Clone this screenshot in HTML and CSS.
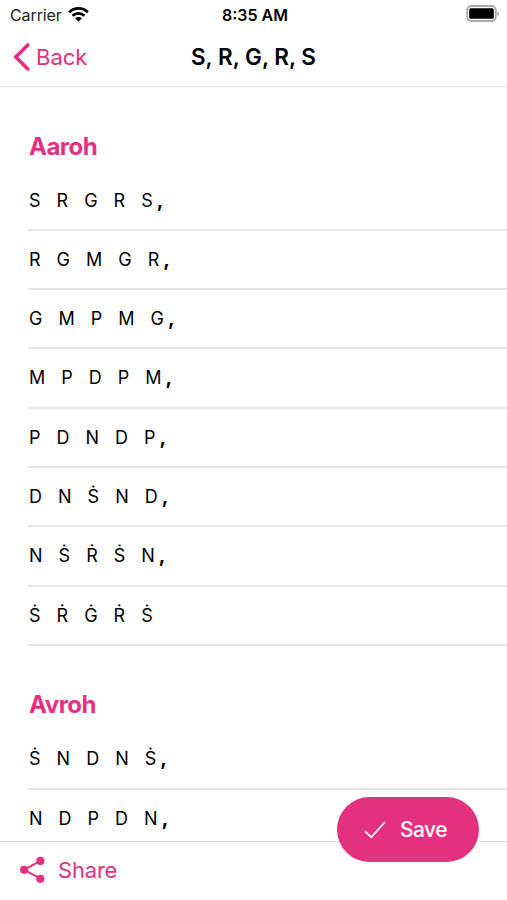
FILE: index.html
```html
<!DOCTYPE html>
<html lang="en">
<head>
    <meta charset="UTF-8">
    <meta name="viewport" content="width=device-width, initial-scale=1.0">
    <title>S, R, G, R, S</title>
    <link rel="stylesheet" href="styles.css">
</head>
<body>
    <div class="screen">
        <div class="status-bar">
            <div class="carrier">
                <span>Carrier</span>
                <svg class="wifi" width="21" height="15" viewBox="0 0 21 15">
                    <g fill="none" stroke="#000" stroke-width="2.7">
                        <path d="M1.2 5.2C6.5 0.2 14.5 0.2 19.8 5.2"/>
                        <path d="M4.5 8.8C8 5.6 13 5.6 16.5 8.8"/>
                    </g>
                    <path d="M7 11.2C9 9.5 12 9.5 14 11.2L10.5 14.8Z"/>
                </svg>
            </div>
            <span class="time">8:35 AM</span>
            <svg class="battery" width="34" height="18" viewBox="0 0 34 18">
                <rect x="1.2" y="1" width="28.6" height="15" rx="4.2" fill="#fff" stroke="#aaa" stroke-width="1.8"/>
                <rect x="3.2" y="3.2" width="24.6" height="10.6" rx="1.6" fill="#000"/>
                <path d="M31.4 6.4Q33.2 7 33.2 8.7T31.4 11Z" fill="#aaa"/>
            </svg>
        </div>

        <header class="nav">
            <a class="back">
                <svg width="17" height="28" viewBox="0 0 17 28">
                    <path d="M14.8 2L2.8 14L14.8 26" fill="none" stroke="currentColor" stroke-width="3.6" stroke-linecap="round"/>
                </svg>
                <span>Back</span>
            </a>
            <h1>S, R, G, R, S</h1>
        </header>

        <main class="content">
            <section>
                <h2>Aaroh</h2>
                <ul class="rows">
                    <li><i>S</i><i>R</i><i>G</i><i>R</i><i>S</i><b>,</b></li>
                    <li><i>R</i><i>G</i><i>M</i><i>G</i><i>R</i><b>,</b></li>
                    <li><i>G</i><i>M</i><i>P</i><i>M</i><i>G</i><b>,</b></li>
                    <li><i>M</i><i>P</i><i>D</i><i>P</i><i>M</i><b>,</b></li>
                    <li><i>P</i><i>D</i><i>N</i><i>D</i><i>P</i><b>,</b></li>
                    <li><i>D</i><i>N</i><i>Ṡ</i><i>N</i><i>D</i><b>,</b></li>
                    <li><i>N</i><i>Ṡ</i><i>Ṙ</i><i>Ṡ</i><i>N</i><b>,</b></li>
                    <li><i>Ṡ</i><i>Ṙ</i><i>Ġ</i><i>Ṙ</i><i>Ṡ</i></li>
                </ul>
            </section>
            <section>
                <h2>Avroh</h2>
                <ul class="rows">
                    <li><i>Ṡ</i><i>N</i><i>D</i><i>N</i><i>Ṡ</i><b>,</b></li>
                    <li><i>N</i><i>D</i><i>P</i><i>D</i><i>N</i><b>,</b></li>
                </ul>
            </section>
        </main>

        <footer class="toolbar">
            <a class="share">
                <svg width="26" height="28" viewBox="0 0 26 28">
                    <path d="M20.4 4.9L4.2 13.8L20.4 22.7" fill="none" stroke="currentColor" stroke-width="2"/>
                    <g fill="currentColor">
                        <circle cx="20.3" cy="4.9" r="4.1"/>
                        <circle cx="4.1" cy="13.8" r="4.1"/>
                        <circle cx="20.3" cy="22.8" r="4.1"/>
                    </g>
                </svg>
                <span>Share</span>
            </a>
        </footer>

        <button class="save">
            <svg width="22" height="18" viewBox="0 0 22 18">
                <path d="M1 10.2L7.2 16.2L21 1" fill="none" stroke="currentColor" stroke-width="1.7"/>
            </svg>
            <span>Save</span>
        </button>
    </div>
</body>
</html>
```

FILE: styles.css
```css
body {
    margin: 0;
    font-family: Inter, "Liberation Sans", sans-serif;
    background-color: #fff;
    color: #000;
}
.screen {
    position: relative;
    display: flex;
    flex-direction: column;
    height: 900px;
    overflow: hidden;
}
.status-bar {
    display: grid;
    grid-template-columns: 1fr auto 1fr;
    align-items: center;
    height: 29px;
    padding: 0 7px 0 10px;
    flex: none;
}
.carrier {
    display: flex;
    align-items: center;
    gap: 6px;
    font-size: 16px;
    letter-spacing: -0.1px;
    color: #222;
}
.time {
    font-size: 16px;
    font-weight: 600;
}
.battery {
    justify-self: end;
    margin-top: -1px;
}
.nav {
    display: grid;
    grid-template-columns: 1fr auto 1fr;
    align-items: center;
    box-sizing: border-box;
    height: 58px;
    padding: 0 13px 2px;
    border-bottom: 1px solid #e3e3e3;
    flex: none;
}
.back {
    display: flex;
    align-items: center;
    gap: 6px;
    font-size: 22px;
    color: #e33180;
}
.nav h1 {
    margin: 0;
    font-size: 22.5px;
    font-weight: 600;
}
.content {
    flex: 1;
    min-height: 0;
    overflow: hidden;
    padding-left: 28px;
}
.content h2 {
    margin: 0;
    padding-top: 43.5px;
    height: 41px;
    font-size: 24px;
    font-weight: 700;
    letter-spacing: -0.5px;
    text-indent: 1px;
    line-height: 32px;
    color: #e33180;
}
.rows {
    list-style: none;
    margin: 0;
    padding: 0;
}
.rows li {
    display: flex;
    align-items: baseline;
    box-sizing: border-box;
    height: 59.3px;
    padding-left: 1px;
    line-height: 57px;
    border-bottom: 2px solid #e6e6e6;
    font-size: 18px;
}
.rows i {
    font-style: normal;
    margin-right: 16px;
}
.rows b {
    margin-left: -12px;
    font-size: 20px;
}
.toolbar {
    display: flex;
    align-items: center;
    box-sizing: border-box;
    height: 59px;
    padding: 0 20px 2px;
    border-top: 1px solid #dedede;
    flex: none;
}
.share {
    display: flex;
    align-items: center;
    gap: 12px;
    font-size: 22px;
    letter-spacing: -0.2px;
    color: #e33180;
}
/* floats over the list and the toolbar */
.save {
    position: absolute;
    right: 28px;
    bottom: 38px;
    display: flex;
    align-items: center;
    justify-content: center;
    gap: 14px;
    width: 142px;
    height: 65px;
    padding: 0 5px 0 0;
    border: none;
    border-radius: 33px;
    background-color: #e33180;
    color: #fff;
    font-family: inherit;
    font-size: 21px;
    font-weight: 500;
    letter-spacing: -0.5px;
}
```
